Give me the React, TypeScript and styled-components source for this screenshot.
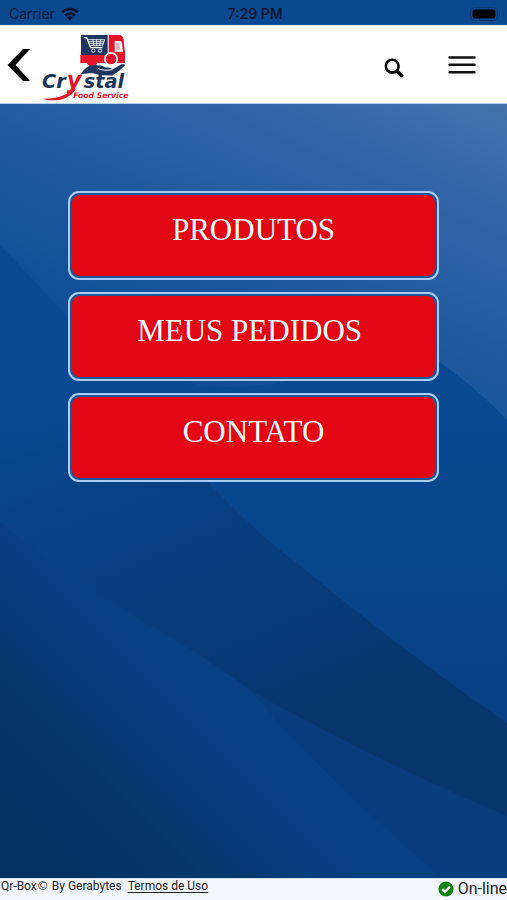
import React from "react";
import styled, { createGlobalStyle } from "styled-components";

const GlobalStyle = createGlobalStyle`
  *, *::before, *::after { box-sizing: border-box; }
  body { margin: 0; background: #0a4990; }
`;

const Page = styled.div`
  display: flex;
  flex-direction: column;
  min-height: 100vh;
  font-family: Roboto, "Liberation Sans", sans-serif;
`;

const StatusBar = styled.div`
  display: grid;
  grid-template-columns: 1fr auto 1fr;
  align-items: center;
  height: 25px;
  padding: 2px 6px 0 9px;
  background: #0a4990;
  color: #061a38;
  font-family: Inter, sans-serif;
  font-size: 14px;
  line-height: 20px;
`;

const Carrier = styled.span`
  display: flex;
  align-items: center;
  gap: 6px;
`;

const Clock = styled.span`
  font-weight: 600;
`;

const BatterySlot = styled.span`
  display: flex;
  justify-content: flex-end;
`;

const Header = styled.header`
  display: flex;
  align-items: center;
  height: 79px;
  padding: 2px 31px 0 6px;
  background: #fff;
  border-bottom: 1px solid #b9d3ee;
`;

const IconButton = styled.button`
  display: flex;
  padding: 0;
  border: 0;
  background: none;
  color: #000;
  cursor: pointer;
`;

const Brand = styled.a`
  display: flex;
  align-self: stretch;
  align-items: center;
  margin-right: auto;
`;

const Tools = styled.div`
  display: flex;
  align-items: center;
  gap: 44px;
`;

const Main = styled.main`
  position: relative;
  flex: 1;
  display: flex;
  flex-direction: column;
  align-items: center;
  gap: 12px;
  padding: 87px 16px 40px;
  overflow: hidden;
`;

const Backdrop = styled.svg`
  position: absolute;
  inset: 0;
  width: 100%;
  height: 100%;
`;

const MenuButton = styled.button`
  position: relative;
  width: 78%;
  padding: 2px;
  border: 2px solid #a9cdf2;
  border-radius: 11px;
  background: #1c5496;
  cursor: pointer;
`;

const MenuLabel = styled.span`
  display: block;
  padding: 17px 8px 28px;
  border-radius: 8px;
  background: #e30613;
  color: #fff;
  font-family: "Liberation Serif", serif;
  font-size: 31px;
  line-height: 36px;
  white-space: pre;
`;

const Footer = styled.footer`
  display: flex;
  justify-content: space-between;
  align-items: flex-start;
  height: 22px;
  background: #f3f7fc;
  border-top: 1px solid #d5e2f2;
  color: #222;
`;

const Credits = styled.div`
  display: flex;
  gap: 6px;
  padding-left: 1px;
  font-size: 12px;
  line-height: 14px;
`;

const Copyright = styled.span`
  font-family: "DejaVu Sans", sans-serif;
`;

const TermsLink = styled.a`
  color: inherit;
  text-underline-offset: 2px;
`;

const Connection = styled.div`
  display: flex;
  align-items: center;
  gap: 4px;
  font-size: 16px;
  line-height: 20px;
`;

const WifiIcon = () => (
  <svg width="18" height="14" viewBox="0 0 18 14" fill="none" stroke="#04142e" strokeWidth="2.6" aria-hidden="true">
    <path d="M1 5.2a11.6 11.6 0 0 1 16 0" />
    <path d="M4 8.6a7.2 7.2 0 0 1 10 0" />
    <path d="M9 13.6 6.1 10.7a4.2 4.2 0 0 1 5.8 0z" fill="#04142e" stroke="none" />
  </svg>
);

const BatteryIcon = () => (
  <svg width="31" height="14" viewBox="0 0 31 14" aria-hidden="true">
    <rect x="0.5" y="0.5" width="27" height="13" rx="4" fill="none" stroke="#083a76" />
    <rect x="2.500" y="2.500" width="23" height="9" rx="2.500" fill="#000" />
    <path d="M29 4.5q2 2.5 0 5z" fill="#083a76" />
  </svg>
);

const BackIcon = () => (
  <svg width="26" height="34" viewBox="0 0 26 34" aria-hidden="true">
    <path d="M17 1h7L9.500 17 24 33h-7L1.500 17z" fill="#000" />
  </svg>
);

const SearchIcon = () => (
  <svg width="20" height="26" viewBox="0 -6 20 26" fill="none" stroke="#000" aria-hidden="true">
    <circle cx="8.200" cy="8.200" r="6.400" strokeWidth="2.600" />
    <path d="m13 13 4.600 4.600" strokeWidth="3.400" strokeLinecap="round" />
  </svg>
);

const MenuIcon = () => (
  <svg width="28" height="18" viewBox="0 0 28 18" stroke="#111" strokeWidth="2.500" strokeLinecap="round" aria-hidden="true">
    <path d="M1.500 1.500h25M1.500 8.800h25M1.500 16.200h25" />
  </svg>
);

const OnlineIcon = () => (
  <svg width="16" height="16" viewBox="0 0 16 16" aria-hidden="true">
    <circle cx="8" cy="8" r="7.600" fill="#0c830c" />
    <path d="m4.200 8.100 2.700 2.700 5-5" fill="none" stroke="#fff" strokeWidth="2.400" />
  </svg>
);

const BrandLogo = () => (
  <svg width="108" height="76" viewBox="6 -2 324 228" role="img" aria-label="Crystal Food Service">
    <path d="M153 22h80v60h-80z" fill="#1c355e" />
    <path d="M236 22h31q12 0 14 14l4 37v27H236z" fill="#e6132b" />
    <path d="M254 40h15q6 0 7 6l3 26h-25z" fill="#fff" />
    <path d="M258 46h9l4 20h-13z" fill="#e6132b" opacity=".35" />
    <path d="M151 82h134v24h-83a17 17 0 0 1-31 0h-20z" fill="#e6132b" />
    <circle cx="243" cy="94" r="21" fill="#fff" />
    <circle cx="243" cy="94" r="16" fill="#e6132b" />
    <g fill="none" stroke="#fff" strokeWidth="2.500">
      <path d="M161 30h9l12 30h36" strokeWidth="4" />
      <path d="M173 36h51l-6 18h-38M176 42h46M178 48h42M188 36l4 18M200 36v18M212 36l-3 18" />
      <circle cx="190" cy="69" r="5" />
      <circle cx="210" cy="69" r="5" />
    </g>
    <path d="M151 141q16-29 43-29 20 0 31 7l14 1q8 1 8 6l24-15q12-5 14 2-18 20-37 30-34 3-59-6-21-2-38 4z" fill="#1c355e" />
    <path d="M204 122q17 9 42 4" fill="none" stroke="#fff" strokeWidth="3" />
    <g fontFamily="DejaVu Sans" fontStyle="italic" fontWeight="700">
      <text x="36" y="181" fontSize="58" fill="#1c355e">Cr</text>
      <text x="110" y="181" fontSize="68" fill="#e6132b">y</text>
      <text x="161" y="181" fontSize="58" fill="#1c355e">stal</text>
      <text x="130" y="212" fontSize="23" fill="#e6132b">Food Service</text>
    </g>
    <path d="M36 213q66 2 94-31l8 2q-24 36-72 34-20-1-30-5z" fill="#e6132b" />
  </svg>
);

const WaveBackdrop = () => (
  <Backdrop viewBox="0 0 507 774" preserveAspectRatio="none" aria-hidden="true">
    <defs>
      <linearGradient id="base" x1="0" y1="0" x2="0" y2="1">
        <stop offset="0.200" stopColor="#0a4993" />
        <stop offset="0.350" stopColor="#0a4a94" />
        <stop offset="0.550" stopColor="#07468b" />
        <stop offset="0.800" stopColor="#073f80" />
      </linearGradient>
      <linearGradient id="sheen" gradientUnits="userSpaceOnUse" x1="507" y1="0" x2="340" y2="370">
        <stop offset="0" stopColor="#4373aa" />
        <stop offset="0.250" stopColor="#3366a6" />
        <stop offset="0.550" stopColor="#215b9e" />
        <stop offset="0.800" stopColor="#14529a" />
        <stop offset="1" stopColor="#0b4a93" />
      </linearGradient>
      <linearGradient id="band" gradientUnits="userSpaceOnUse" x1="180" y1="260" x2="340" y2="640">
        <stop offset="0" stopColor="#083f80" stopOpacity="0" />
        <stop offset="0.350" stopColor="#083f80" />
        <stop offset="0.600" stopColor="#083c79" />
        <stop offset="0.900" stopColor="#06386e" />
      </linearGradient>
      <linearGradient id="fold" gradientUnits="userSpaceOnUse" x1="200" y1="600" x2="50" y2="750">
        <stop offset="0" stopColor="#083f81" />
        <stop offset="0.150" stopColor="#083e7e" />
        <stop offset="0.500" stopColor="#06386e" />
        <stop offset="1" stopColor="#053162" />
      </linearGradient>
    </defs>
    <path d="M0 0h507v774H0z" fill="url(#base)" />
    <path d="M0 0h507v316Q460 266 400 235 300 290 200 282 110 250 67 212L0 141z" fill="url(#sheen)" />
    <path d="M0 230Q140 300 213 383 260 432 293 456 400 545 507 619V774H0z" fill="url(#band)" />
    <path d="M0 418Q60 466 130 510 200 549 250 586 370 654 507 712V774H0z" fill="url(#fold)" />
    <path d="M250 586Q370 654 507 712V774H443Q330 680 250 586z" fill="#083b78" opacity=".6" />
  </Backdrop>
);

const entries = ["PRODUTOS", "MEUS PEDIDOS ", "CONTATO"];

export default function App() {
  return (
    <Page>
      <GlobalStyle />
      <StatusBar>
        <Carrier>
          Carrier
          <WifiIcon />
        </Carrier>
        <Clock>7:29 PM</Clock>
        <BatterySlot>
          <BatteryIcon />
        </BatterySlot>
      </StatusBar>
      <Header>
        <IconButton type="button" aria-label="Voltar">
          <BackIcon />
        </IconButton>
        <Brand href="#inicio">
          <BrandLogo />
        </Brand>
        <Tools>
          <IconButton type="button" aria-label="Buscar">
            <SearchIcon />
          </IconButton>
          <IconButton type="button" aria-label="Menu">
            <MenuIcon />
          </IconButton>
        </Tools>
      </Header>
      <Main>
        <WaveBackdrop />
        {entries.map((label) => (
          <MenuButton type="button" key={label}>
            <MenuLabel>{label}</MenuLabel>
          </MenuButton>
        ))}
      </Main>
      <Footer>
        <Credits>
          <span>
            Qr-Box<Copyright>©</Copyright> By Gerabytes
          </span>
          <TermsLink href="#termos">Termos de Uso</TermsLink>
        </Credits>
        <Connection>
          <OnlineIcon />
          On-line
        </Connection>
      </Footer>
    </Page>
  );
}
